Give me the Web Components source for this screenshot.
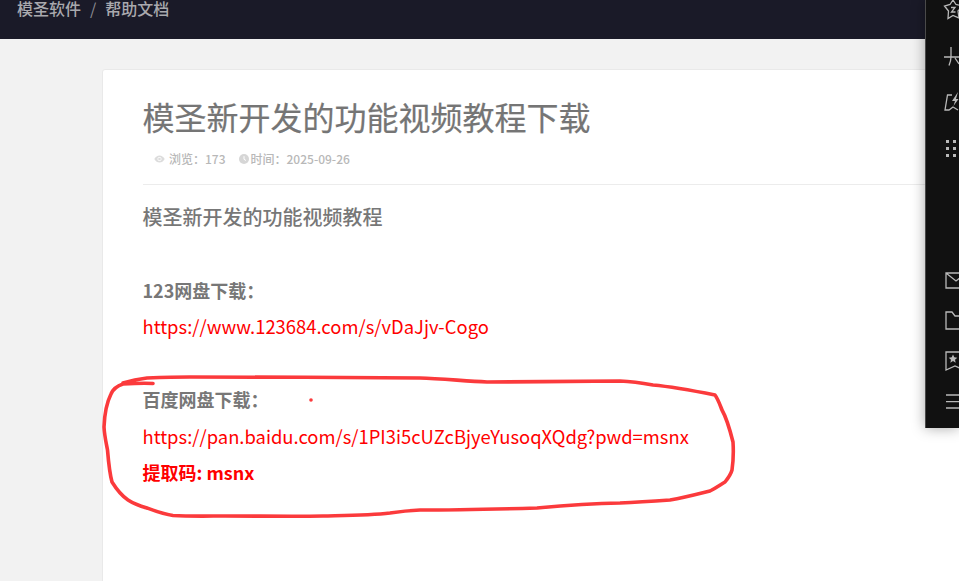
<!DOCTYPE html>
<html lang="zh"><head><meta charset="utf-8"><style>
html,body{margin:0;padding:0;height:581px;overflow:hidden;background:#f2f2f2;font-family:"Noto Sans CJK SC","Noto Sans",sans-serif}
</style></head><body>
<top-nav><span>模圣软件</span><span class="s">/</span><span>帮助文档</span></top-nav>
<page-main>
<doc-card>
<span slot="title">模圣新开发的功能视频教程下载</span>
<doc-meta slot="meta" views="173" date="2025-09-26"></doc-meta>
<doc-line big>模圣新开发的功能视频教程</doc-line>
<doc-line></doc-line>
<doc-line bold>123网盘下载：</doc-line>
<doc-line red>https://www.123684.com/s/vDaJjv-Cogo</doc-line>
<doc-line></doc-line>
<doc-line bold>百度网盘下载：</doc-line>
<doc-line red>https://pan.baidu.com/s/1PI3i5cUZcBjyeYusoqXQdg?pwd=msnx</doc-line>
<doc-line red bold>提取码: msnx</doc-line>
</doc-card>
</page-main>
<ink-mark></ink-mark>
<side-rail></side-rail>
<script>
function def(name,html){customElements.define(name,class extends HTMLElement{constructor(){super();this.attachShadow({mode:'open'}).innerHTML=typeof html==='function'?html(this):html;}});}
def('top-nav',`<style>:host{display:flex;height:39px;box-sizing:border-box;background:#1a1a28;color:#a9a9ae;font-size:16px;line-height:16px;font-weight:500;padding:0 17px;overflow:hidden;align-items:flex-start}
.w{display:flex}::slotted(.s){padding:0 9px;color:#8d8d93;font-weight:400}</style><div class="w"><slot></slot></div>`);
def('page-main',`<style>:host{display:block;padding:30px 0 0 102px;width:1000px;box-sizing:border-box}</style><slot></slot>`);
def('doc-card',`<style>:host{display:block;background:#fff;border:1px solid #e9e9e9;border-radius:3px;padding:22px 0 0 39.5px;height:600px;box-sizing:border-box;width:1000px}
h1{margin:0;font-size:32px;font-weight:400;line-height:48px;color:#757575;-webkit-text-stroke:.2px #757575}
.hr{border-bottom:1px solid #ececec;margin-top:14px;height:0}
.c{padding-top:13.5px}</style><h1><slot name="title"></slot></h1><slot name="meta"></slot><div class="hr"></div><div class="c"><slot></slot></div>`);
const eye=`<svg width="11" height="8" viewBox="0 0 11 8"><path d="M.3 4C1.6 1.6 3.4.4 5.5.4S9.4 1.6 10.700 4C9.400 6.400 7.600 7.600 5.500 7.600S1.600 6.400.3 4Z" fill="#dcdcdc"/><circle cx="5.500" cy="4" r="2.100" fill="#fff"/><circle cx="5.500" cy="4" r="1.300" fill="#dcdcdc"/></svg>`;
const clock=`<svg width="10" height="10" viewBox="0 0 10 10"><circle cx="5" cy="5" r="5" fill="#d6d6d6"/><path d="M5 2.200V5.300L7 6.500" fill="none" stroke="#fff" stroke-width="1"/></svg>`;
def('doc-meta',h=>`<style>:host{display:flex;align-items:center;height:22px;margin-top:8px;padding-left:11.5px;font-size:12px;line-height:22px;color:#b8b8b8;font-weight:500}
svg{flex:none}.i{display:flex;align-items:center}.i svg{margin-right:4px}.i+.i{margin-left:13px}.i+.i svg{margin-right:2px}</style>
<span class="i">${eye}<span>浏览：${h.getAttribute('views')}</span></span><span class="i">${clock}<span>时间：${h.getAttribute('date')}</span></span>`);
def('doc-line',h=>`<style>:host{display:block;height:36.5px;line-height:36.5px;font-size:18px;color:#777;white-space:nowrap}
:host([big]){font-size:20px;font-weight:500}
:host([red]){color:#f00;font-size:18.4px}
:host([bold]){font-weight:700;font-size:18px}</style><slot></slot>`);
def('ink-mark',`<style>:host{position:absolute;left:0;top:0;width:959px;height:581px;pointer-events:none;display:block}svg{display:block}</style>
<svg width="959" height="581" viewBox="0 0 959 581"><g fill="none" stroke="#fb3a3c" stroke-width="3.600" stroke-linecap="round" stroke-linejoin="round">
<path d="M153 383.500C143 383 132 383.500 123 384C117 386 113 389 111 394C107 402 104.500 414 104 427C104.500 436 106 442 107.500 450C108.500 462 109.500 473 112 482C117 490 122 496 128 500C134 504 140 506 147 508C155 511 164 514.500 173 515.500C190 516.500 210 516 225 516C260 516 295 516.500 323 516C345 515.500 370 515.500 390 513C400 511.500 410 510.500 420 510C460 510 500 509 537 508C565 505.500 595 503.500 620 503C640 502 655 501 670 500C685 497.500 698 494 710 491C716 488 720 485 725 482C729 477 731 474 732 470C733.500 460 733.500 450 733 442C730 430 726 417 722 410C720 405 718 399 715 395C695 391 675 387 653 385C642 383 632 381.500 620 381C580 381 530 382 487 382C465 381 440 378.500 420 378C350 377.500 260 377 190 377C175 377 160 377.500 147 378C138 379 131 380.500 123 383"/></g>
<circle cx="311" cy="400" r="1.800" fill="#fb3a3c"/></svg>`);
const S='fill="none" stroke="#b9b9b9" stroke-width="1.300"';
def('side-rail',`<style>:host{position:absolute;left:925px;top:0;width:34px;height:428px;box-sizing:border-box;background:#111;border-left:1px solid #4a4a4a;box-shadow:0 0 14px rgba(0,0,0,.35);overflow:hidden;display:flex;flex-direction:column;padding:0 0 0 18px;justify-content:space-between}
.g{display:flex;flex-direction:column;flex:none}.a{gap:26px}.b{gap:20px;padding-bottom:17px}svg{display:block;flex:none;overflow:visible}</style>
<div class="g a">
<svg width="22" height="20" viewBox="0 0 22 20"><path ${S} d="M9 0L12 4.500L18.500 6L14 11L15 18L9 15.500L4 18.500L4.500 11L.5 6L6 4.500Z"/><path ${S} d="M7 7.500H11L7.500 12H11.500"/></svg>
<svg width="22" height="20" viewBox="0 0 22 20"><path ${S} d="M0 11H16M7 1V11C7 14 6 17 5 19.500M11 12L15 18"/></svg>
<svg width="22" height="20" viewBox="0 0 22 20"><path ${S} d="M8 3H3.500L1 18H5L9 15L14 18"/><path fill="#b9b9b9" d="M14 0L8 9H11L9.500 14L14.500 7H12Z"/></svg>
<svg width="22" height="20" viewBox="0 0 22 20"><g fill="#b9b9b9"><rect x="2" y="2" width="3" height="3"/><rect x="9" y="2" width="3" height="3"/><rect x="16" y="2" width="3" height="3"/><rect x="2" y="9" width="3" height="3"/><rect x="9" y="9" width="3" height="3"/><rect x="16" y="9" width="3" height="3"/><rect x="2" y="16" width="3" height="3"/><rect x="9" y="16" width="3" height="3"/><rect x="16" y="16" width="3" height="3"/></g></svg>
</div>
<div class="g b">
<svg width="22" height="20" viewBox="0 0 22 20"><path ${S} d="M2 2H22V17H2ZM2 2L12 10L22 2"/></svg>
<svg width="22" height="20" viewBox="0 0 22 20"><path ${S} d="M2 1H8L11 5H22V18H2Z"/></svg>
<svg width="22" height="20" viewBox="0 0 22 20"><path ${S} d="M2 1H20V19L11 15L2 19Z"/><path fill="#b9b9b9" d="M9 3.500L10.300 6.300L13.300 6.700L11 8.700L11.700 11.700L9 10.100L6.300 11.700L7 8.700L4.700 6.700L7.700 6.300Z"/></svg>
<svg width="22" height="20" viewBox="0 0 22 20"><path ${S} d="M2 4H22M2 10.600H22M2 17H22"/></svg>
</div>`);
</script>
</body></html>
